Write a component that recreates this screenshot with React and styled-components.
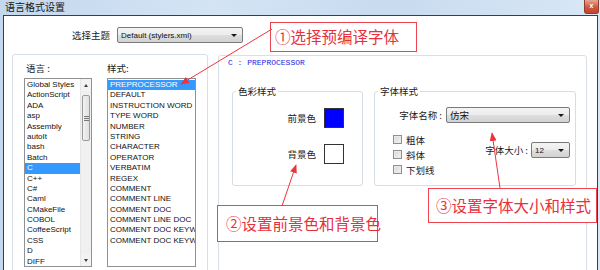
import React from 'react';
import styled, { createGlobalStyle } from 'styled-components';

const GlobalStyle = createGlobalStyle`
  html, body { margin: 0; padding: 0; background: #fff; }
  body {
    width: 600px; height: 270px; overflow: hidden;
    font-family: "Noto Sans CJK SC", "Liberation Sans", sans-serif;
  }
  * { box-sizing: border-box; }
`;

const Window = styled.div`
  position: relative;
  width: 600px;
  height: 270px;
  overflow: hidden;
  display: flex;
  flex-direction: column;
  background: linear-gradient(90deg, #c3d7ed 0%, #d4e4f5 35%, #c8dbef 65%, #d9e7f6 100%);
`;

const TitleBar = styled.div`
  height: 15px;
  flex: none;
  display: flex;
  align-items: flex-start;
  justify-content: space-between;
  padding-left: 5px;
`;

const Title = styled.span`
  font-size: 10px;
  line-height: 14px;
  color: #151515;
`;

const CloseButton = styled.div`
  width: 15px;
  height: 14px;
  margin-right: 1px;
  background: linear-gradient(#e9a692, #d0573e 55%, #c4452e);
  border: 1px solid #8d3f30;
  border-top: none;
  border-radius: 0 0 3px 3px;
  color: #fff;
  font: bold 7px/12px "Liberation Sans", sans-serif;
  text-align: center;
`;

const Client = styled.div`
  flex: 1;
  margin: 0 2px 0 3px;
  background: #fff;
  border: 1px solid #3e3e3e;
  border-bottom: none;
  display: flex;
  flex-direction: column;
`;

const ThemeRow = styled.div`
  display: flex;
  align-items: center;
  gap: 7px;
  height: 16px;
  margin-top: 11px;
  padding-left: 68px;
`;

const Label = styled.span`
  font-size: 9.5px;
  line-height: 14px;
  color: #1a1a1a;
  white-space: nowrap;
`;

const Combo = styled.div`
  width: ${p => p.$w}px;
  height: 16px;
  display: flex;
  align-items: center;
  justify-content: space-between;
  padding: 0 5px 0 3px;
  border: 1px solid #7a7a7a;
  border-radius: 2px;
  background: linear-gradient(#f4f4f4, #ececec 48%, #dedede 52%, #d2d2d2);
  font-family: ${p => (p.$cjk ? '"Noto Sans CJK SC", sans-serif' : '"Liberation Sans", sans-serif')};
  font-size: ${p => (p.$cjk ? '9.5px' : '8px')};
  color: #111;
  white-space: nowrap;
`;

const DownArrow = styled.span`
  width: 0;
  height: 0;
  border-left: 3px solid transparent;
  border-right: 3px solid transparent;
  border-top: 3px solid #1a1a1a;
`;

const MainRow = styled.div`
  display: flex;
  align-items: flex-start;
  gap: 10px;
  margin-top: 11px;
  padding-left: 8px;
`;

const LeftGroup = styled.div`
  width: 196px;
  height: 240px;
  flex: none;
  border: 1px solid #d8dfe6;
  border-radius: 3px;
  padding: 6px 0 0 11px;
  display: flex;
  gap: 15px;
`;

const ListColumn = styled.div`
  display: flex;
  flex-direction: column;
  width: ${p => p.$w}px;
`;

const ListLabel = styled(Label)`
  padding-left: ${p => p.$pad || 0}px;
  margin-bottom: 3px;
`;

const ListBox = styled.div`
  height: 189px;
  border: 1px solid #8f9193;
  display: flex;
  overflow: hidden;
  background: #fff;
`;

const Items = styled.div`
  flex: 1;
  min-width: 0;
  padding-top: 1px;
  overflow: hidden;
`;

const Item = styled.div`
  height: 10.4px;
  line-height: 10.4px;
  padding-left: 2px;
  font-family: "Liberation Sans", sans-serif;
  font-size: 8px;
  white-space: nowrap;
  color: ${p => (p.$sel ? '#fff' : '#111')};
  background: ${p => (p.$sel ? '#3399ff' : 'transparent')};
`;

const ScrollBar = styled.div`
  width: 11px;
  flex: none;
  display: flex;
  flex-direction: column;
  background: #f0f0f0;
  border-left: 1px solid #e6e6e6;
`;

const ScrollButton = styled.div`
  height: 12px;
  display: flex;
  align-items: center;
  justify-content: center;
  background: #f3f3f3;
`;

const TinyArrow = styled.span`
  width: 0;
  height: 0;
  border-left: 2.5px solid transparent;
  border-right: 2.5px solid transparent;
  ${p => (p.$up ? 'border-bottom: 3px solid #404040;' : 'border-top: 3px solid #404040;')}
`;

const Track = styled.div`
  flex: 1;
  padding: 4px 0 0 0;
`;

const Thumb = styled.div`
  height: 46px;
  margin: 0 1px;
  border: 1px solid #9b9b9b;
  border-radius: 2px;
  background: linear-gradient(90deg, #f2f2f2, #e0e0e0);
  display: flex;
  flex-direction: column;
  align-items: center;
  justify-content: center;
  gap: 1px;
`;

const Grip = styled.span`
  width: 5px;
  height: 1px;
  background: #777;
`;

const RightPanel = styled.div`
  width: 369px;
  height: 240px;
  flex: none;
  margin-top: 1px;
  border: 1px solid #d8dfe6;
  border-radius: 3px;
`;

const Header = styled.div`
  padding: 2px 0 0 9px;
  line-height: 10px;
  font-family: "Liberation Mono", monospace;
  font-size: 8px;
  color: #1a1ae8;
  white-space: pre;
`;

const GroupRow = styled.div`
  display: flex;
  gap: 11px;
  margin: 17px 0 0 13px;
`;

const GroupBox = styled.fieldset`
  margin: 0;
  padding: 0;
  min-inline-size: 0;
  width: ${p => p.$w}px;
  height: 101px;
  border: 1px solid #d6dde4;
  border-radius: 3px;
`;

const Legend = styled.legend`
  margin-left: 3px;
  padding: 0 2px;
  font-size: 9.5px;
  line-height: 12px;
  color: #1a1a1a;
`;

const ColorContent = styled.div`
  display: flex;
  flex-direction: column;
  align-items: flex-end;
  gap: 16px;
  padding: 11px 18px 0 0;
`;

const ColorRow = styled.div`
  display: flex;
  align-items: center;
  gap: 8px;
`;

const Swatch = styled.div`
  width: 20px;
  height: 20px;
  border: 1px solid #333;
  background: ${p => p.$c};
`;

const FontContent = styled.div`
  padding: 10px 5px 0 18px;
  display: flex;
  flex-direction: column;
`;

const NameRow = styled.div`
  display: flex;
  align-items: center;
  justify-content: flex-end;
  gap: 4px;
`;

const OptionsRow = styled.div`
  display: flex;
  justify-content: space-between;
  align-items: flex-start;
  margin-top: 9px;
`;

const CheckColumn = styled.div`
  display: flex;
  flex-direction: column;
`;

const CheckRow = styled.label`
  height: 15px;
  display: flex;
  align-items: center;
  gap: 4px;
`;

const CheckBox = styled.span`
  width: 9px;
  height: 9px;
  border: 1px solid #8e8f8f;
  background: linear-gradient(135deg, #d6d6d6, #f4f4f4);
  box-shadow: inset 0 0 0 1px #eaeaea;
`;

const SizeRow = styled.div`
  display: flex;
  align-items: center;
  gap: 3px;
  margin-top: 10px;
`;

const Callout = styled.div`
  position: absolute;
  left: ${p => p.$x}px;
  top: ${p => p.$y}px;
  width: ${p => p.$w}px;
  height: ${p => p.$h}px;
  border: 1px solid #ee4450;
  background: #fff;
  display: flex;
  align-items: center;
  padding-left: ${p => p.$pad}px;
  color: #e8303c;
  font-family: "Noto Sans CJK SC", sans-serif;
  font-size: 15.5px;
  line-height: 1;
  white-space: nowrap;
`;

const ArrowLayer = styled.svg`
  position: absolute;
  left: 0;
  top: 0;
  width: 600px;
  height: 270px;
  pointer-events: none;
`;

const languages = ['Global Styles', 'ActionScript', 'ADA', 'asp', 'Assembly', 'autoIt', 'bash', 'Batch', 'C', 'C++', 'C#', 'Caml', 'CMakeFile', 'COBOL', 'CoffeeScript', 'CSS', 'D', 'DIFF'];
const styles = ['PREPROCESSOR', 'DEFAULT', 'INSTRUCTION WORD', 'TYPE WORD', 'NUMBER', 'STRING', 'CHARACTER', 'OPERATOR', 'VERBATIM', 'REGEX', 'COMMENT', 'COMMENT LINE', 'COMMENT DOC', 'COMMENT LINE DOC', 'COMMENT DOC KEYWORD', 'COMMENT DOC KEYWORD ERROR'];

export default function App() {
  return (
    <>
      <GlobalStyle />
      <Window>
        <TitleBar>
          <Title>语言格式设置</Title>
          <CloseButton>x</CloseButton>
        </TitleBar>
        <Client>
          <ThemeRow>
            <Label>选择主题</Label>
            <Combo $w={126}>
              <span>Default (stylers.xml)</span>
              <DownArrow />
            </Combo>
          </ThemeRow>
          <MainRow>
            <LeftGroup>
              <ListColumn $w={68}>
                <ListLabel $pad={2}>语言 :</ListLabel>
                <ListBox>
                  <Items>
                    {languages.map(l => (
                      <Item key={l} $sel={l === 'C'}>{l}</Item>
                    ))}
                  </Items>
                  <ScrollBar>
                    <ScrollButton><TinyArrow $up /></ScrollButton>
                    <Track>
                      <Thumb><Grip /><Grip /><Grip /></Thumb>
                    </Track>
                    <ScrollButton><TinyArrow /></ScrollButton>
                  </ScrollBar>
                </ListBox>
              </ListColumn>
              <ListColumn $w={89}>
                <ListLabel>样式:</ListLabel>
                <ListBox>
                  <Items>
                    {styles.map((s, i) => (
                      <Item key={s} $sel={i === 0}>{s}</Item>
                    ))}
                  </Items>
                </ListBox>
              </ListColumn>
            </LeftGroup>
            <RightPanel>
              <Header>C : PREPROCESSOR</Header>
              <GroupRow>
                <GroupBox $w={131}>
                  <Legend>色彩样式</Legend>
                  <ColorContent>
                    <ColorRow>
                      <Label>前景色</Label>
                      <Swatch $c="#0000ff" />
                    </ColorRow>
                    <ColorRow>
                      <Label>背景色</Label>
                      <Swatch $c="#ffffff" />
                    </ColorRow>
                  </ColorContent>
                </GroupBox>
                <GroupBox $w={202}>
                  <Legend>字体样式</Legend>
                  <FontContent>
                    <NameRow>
                      <Label>字体名称 :</Label>
                      <Combo $w={124} $cjk>
                        <span>仿宋</span>
                        <DownArrow />
                      </Combo>
                    </NameRow>
                    <OptionsRow>
                      <CheckColumn>
                        <CheckRow><CheckBox /><Label>粗体</Label></CheckRow>
                        <CheckRow><CheckBox /><Label>斜体</Label></CheckRow>
                        <CheckRow><CheckBox /><Label>下划线</Label></CheckRow>
                      </CheckColumn>
                      <SizeRow>
                        <Label>字体大小 :</Label>
                        <Combo $w={39}>
                          <span>12</span>
                          <DownArrow />
                        </Combo>
                      </SizeRow>
                    </OptionsRow>
                  </FontContent>
                </GroupBox>
              </GroupRow>
            </RightPanel>
          </MainRow>
        </Client>

        <Callout $x={270} $y={22} $w={147} $h={30} $pad={4}>①选择预编译字体</Callout>
        <Callout $x={217} $y={205} $w={161} $h={37} $pad={8}>②设置前景色和背景色</Callout>
        <Callout $x={428} $y={188} $w={169} $h={35} $pad={7}>③设置字体大小和样式</Callout>

        <ArrowLayer viewBox="0 0 600 270">
          <defs>
            <marker id="head" viewBox="0 0 10 8" refX="9" refY="4" markerWidth="9" markerHeight="7" markerUnits="userSpaceOnUse" orient="auto">
              <path d="M0 0 L10 4 L0 8 Z" fill="#ee3340" />
            </marker>
          </defs>
          <line x1="272" y1="29" x2="181" y2="84" stroke="#ee3340" strokeWidth="1" markerEnd="url(#head)" />
          <line x1="282" y1="206" x2="296" y2="165" stroke="#ee3340" strokeWidth="1" markerEnd="url(#head)" />
          <line x1="500" y1="188" x2="492" y2="133" stroke="#ee3340" strokeWidth="1" markerEnd="url(#head)" />
        </ArrowLayer>
      </Window>
    </>
  );
}
